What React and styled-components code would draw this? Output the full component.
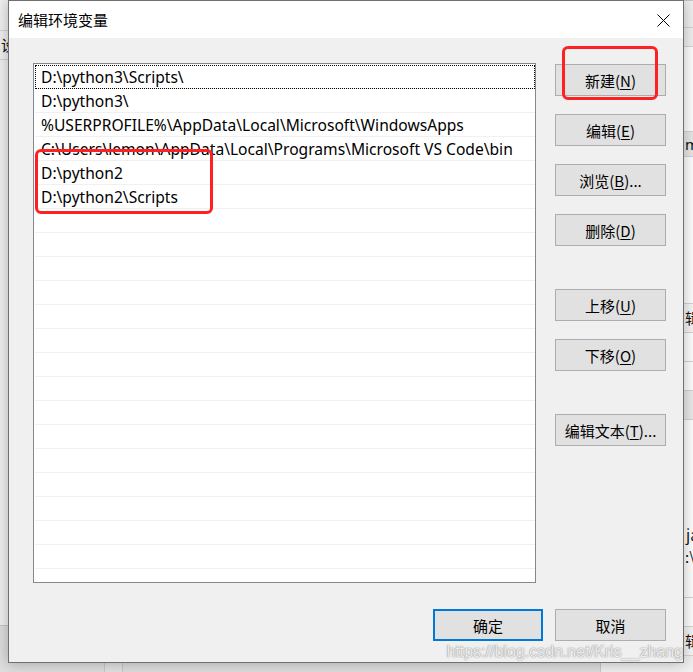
import React from "react";
import styled, { createGlobalStyle } from "styled-components";

const Global = createGlobalStyle`
  html, body { margin: 0; padding: 0; }
  body { width: 693px; height: 672px; overflow: hidden; background: #e4e4e4; }
`;

const UI_FONT = `"Noto Sans", "Noto Sans CJK SC", sans-serif`;

const Desktop = styled.div`
  position: relative;
  width: 693px;
  height: 672px;
  overflow: hidden;
  background: #dedede;
  font-family: ${UI_FONT};
`;

const BackWindow = styled.div`
  position: absolute;
  background: #f0f0f0;
  border: 1px solid #c8c8c8;
`;

const BackRow = styled.div`
  height: ${(p) => p.$h || 24}px;
  border-bottom: 1px solid #d4d4d4;
  background: ${(p) => p.$bg || "transparent"};
  font-size: 15px;
  line-height: ${(p) => p.$h || 24}px;
  color: #111;
  white-space: nowrap;
  overflow: hidden;
  padding-left: ${(p) => p.$pl || 0}px;
`;

const Dialog = styled.div`
  position: absolute;
  left: 8px;
  top: 0;
  width: 674px;
  height: 661px;
  border: 1px solid #707070;
  background: #f0f0f0;
  box-shadow: 0 0 14px rgba(0, 0, 0, 0.28);
  display: flex;
  flex-direction: column;
`;

const TitleBar = styled.div`
  height: 37px;
  background: #fff;
  display: flex;
  align-items: center;
  justify-content: space-between;
  padding: 0 13px 0 9px;
  flex-shrink: 0;
`;

const Title = styled.div`
  font-family: "Noto Sans CJK SC", sans-serif;
  font-size: 15px;
  color: #000;
  margin-top: -1px;
`;

const CloseBtn = styled.div`
  width: 14px;
  height: 14px;
  display: flex;
  align-items: center;
  justify-content: center;
  margin-top: 1px;
`;

const Body = styled.div`
  flex: 1;
  display: flex;
  flex-direction: column;
  padding: 25px 17px 0 24px;
`;

const Main = styled.div`
  display: flex;
  gap: 19px;
`;

const ListBox = styled.div`
  width: 501px;
  height: 518px;
  border: 1px solid #828790;
  background: #fff;
  display: flex;
  flex-direction: column;
  overflow: hidden;
`;

const Row = styled.div`
  position: relative;
  flex-shrink: 0;
  height: 23px;
  margin-left: 1px;
  margin-top: ${(p) => (p.$first ? 1 : 0)}px;
  border-bottom: 1px solid #f0f0f0;
  padding-left: 6px;
  font-size: 15.6px;
  line-height: 24px;
  color: #000;
  white-space: nowrap;
  outline: ${(p) => (p.$focus ? "1px dotted #000" : "none")};
  outline-offset: -1px;
`;

const ButtonCol = styled.div`
  display: flex;
  flex-direction: column;
  padding-top: 1px;
`;

const Group = styled.div`
  display: flex;
  flex-direction: column;
  gap: 18px;
  margin-bottom: ${(p) => p.$mb || 0}px;
`;

const Btn = styled.div`
  box-sizing: border-box;
  width: ${(p) => p.$w || 111}px;
  height: 32px;
  background: #e1e1e1;
  border: ${(p) => (p.$default ? "2px solid #0078d7" : "1px solid #adadad")};
  display: flex;
  align-items: center;
  justify-content: center;
  font-family: "Noto Sans CJK SC", sans-serif;
  font-size: 15px;
  color: #000;
  white-space: nowrap;
  u { text-decoration: underline; text-underline-offset: 2px; }
`;

const Footer = styled.div`
  display: flex;
  justify-content: flex-end;
  gap: 12px;
  margin-top: 26px;
`;

const RedBox = styled.div`
  position: absolute;
  border: 3px solid #ff2121;
  border-radius: 6px;
  box-sizing: border-box;
`;

const Watermark = styled.div`
  position: absolute;
  right: 10px;
  top: 643px;
  font-family: "Liberation Sans", Arial, sans-serif;
  font-size: 16px;
  color: rgba(255, 255, 255, 0.85);
  text-shadow: 0 0 1px rgba(120, 120, 120, 0.9), 0 0 2px rgba(150, 150, 150, 0.6);
  white-space: nowrap;
`;

const Fragment = styled.span`
  position: absolute;
  font-family: "Noto Sans CJK SC", sans-serif;
  font-size: 15px;
  color: #111;
`;

const items = [
  "D:\\python3\\Scripts\\",
  "D:\\python3\\",
  "%USERPROFILE%\\AppData\\Local\\Microsoft\\WindowsApps",
  "C:\\Users\\lemon\\AppData\\Local\\Programs\\Microsoft VS Code\\bin",
  "D:\\python2",
  "D:\\python2\\Scripts",
];

const TOTAL_ROWS = 22;

export default function App() {
  const rows = Array.from({ length: TOTAL_ROWS }, (_, i) => items[i] || "");
  return (
    <Desktop>
      <Global />
      <BackWindow style={{ left: -10, top: -2, width: 40, height: 626 }}>
        <BackRow $h={31} />
        <BackRow $h={28} $pl={10}>设</BackRow>
      </BackWindow>
      <BackWindow style={{ left: 600, top: 0, width: 110, height: 672 }}>
        <BackRow $h={26} />
        <BackRow $h={18} />
        <BackRow $h={84} $bg="#fff" />
        <BackRow $h={24} $bg="#e8e8e8" $pl={84}>m</BackRow>
        <BackRow $h={146} $bg="#fff" />
        <BackRow $h={28} $bg="#f6f6f6" $pl={84}>辑(</BackRow>
        <BackRow $h={28} $bg="#fff" />
        <BackRow $h={28} $bg="#fff" />
        <BackRow $h={28} $bg="#eaeaea" />
        <BackRow $h={177} $bg="#fff" />
        <BackRow $h={28} $bg="#fff" />
        <BackRow $h={28} $bg="#f6f6f6" $pl={84}>辑(</BackRow>
      </BackWindow>
      <BackWindow style={{ left: 104, top: 640, width: 17, height: 40, background: "#e2e2e2" }} />
      <Fragment style={{ left: 686, top: 524 }}>ja</Fragment>
      <Fragment style={{ left: 685, top: 546 }}>:\</Fragment>

      <Dialog>
        <TitleBar>
          <Title>编辑环境变量</Title>
          <CloseBtn>
            <svg width="13" height="13" viewBox="0 0 13 13">
              <path d="M0.5 0.5 L12.5 12.5 M12.5 0.5 L0.5 12.5" stroke="#000" strokeWidth="1" fill="none" />
            </svg>
          </CloseBtn>
        </TitleBar>
        <Body>
          <Main>
            <ListBox>
              {rows.map((t, i) => (
                <Row key={i} $focus={i === 0} $first={i === 0}>
                  {t}
                </Row>
              ))}
            </ListBox>
            <ButtonCol>
              <Group $mb={43}>
                <Btn>新建(<u>N</u>)</Btn>
                <Btn>编辑(<u>E</u>)</Btn>
                <Btn>浏览(<u>B</u>)...</Btn>
                <Btn>删除(<u>D</u>)</Btn>
              </Group>
              <Group $mb={43}>
                <Btn>上移(<u>U</u>)</Btn>
                <Btn>下移(<u>O</u>)</Btn>
              </Group>
              <Group>
                <Btn>编辑文本(<u>T</u>)...</Btn>
              </Group>
            </ButtonCol>
          </Main>
          <Footer>
            <Btn $default $w={110}>确定</Btn>
            <Btn $w={111}>取消</Btn>
          </Footer>
        </Body>
      </Dialog>

      <RedBox style={{ left: 562, top: 46, width: 96, height: 54 }} />
      <RedBox style={{ left: 35, top: 149, width: 178, height: 65 }} />
      <Watermark>https://blog.csdn.net/Kris__zhang</Watermark>
    </Desktop>
  );
}
